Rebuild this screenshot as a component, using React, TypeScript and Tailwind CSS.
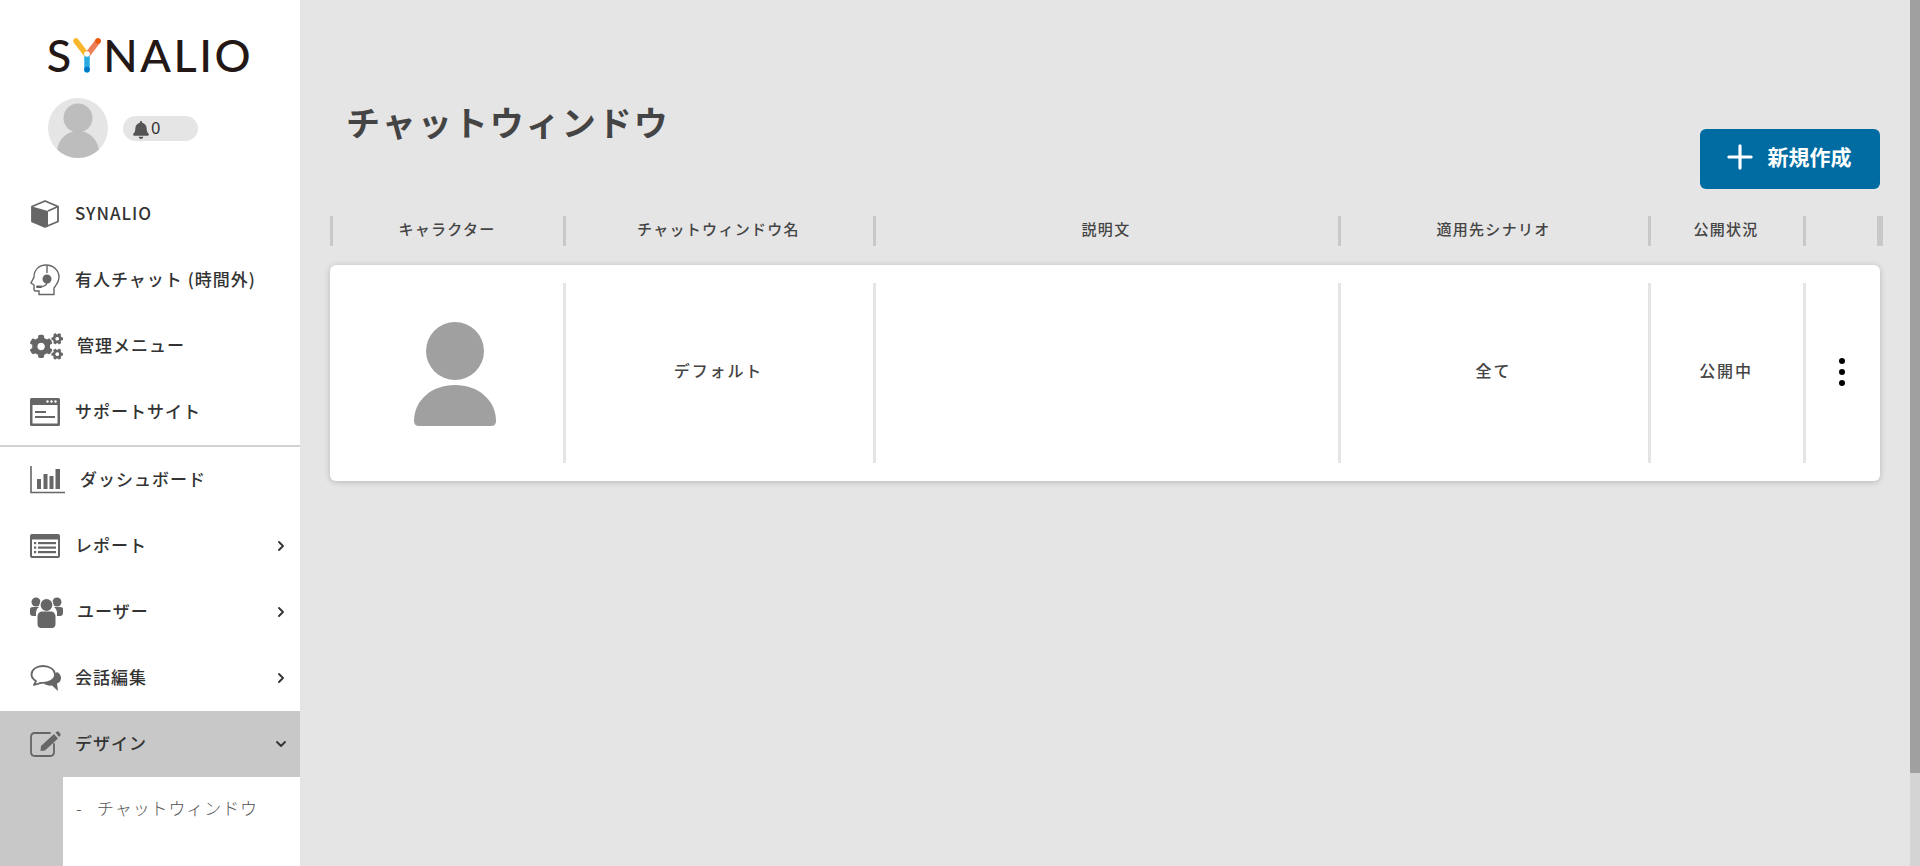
import React from 'react';
import { ChevronDown, ChevronRight, Plus } from 'lucide-react';
import { FaBell, FaCogs } from 'react-icons/fa';

const ICON = '#666666';

function BoxIcon() {
  return (
    <svg width="30" height="30" viewBox="0 0 30 30">
      <path d="M15 2 L28 7.500 V22.500 L15 28 L2 22.500 V7.500 Z" fill="none" stroke={ICON} strokeWidth="1.8" strokeLinejoin="round" />
      <path d="M2 7.500 L18 12 V28 L15 28 L2 22.500 Z" fill={ICON} />
      <path d="M18 12 L28 7.500" stroke={ICON} strokeWidth="1.8" />
    </svg>
  );
}

function HeadsetIcon() {
  return (
    <svg width="30" height="32" viewBox="0 0 30 32" fill="none" stroke={ICON} strokeWidth="1.4">
      <path d="M9 30.500 V27 H5.500 Q4 27 4 25 V21 L1 19 L4 13 C4 6 9 1 16 1 C24 1 29 7 29 13 C29 18 26 21 24 24 V30.500 Z" />
      <path d="M17 1 V9" />
      <circle cx="17" cy="15" r="4.500" fill={ICON} stroke="none" />
      <path d="M17 19 C16 22 13 23 8 23" />
      <rect x="6" y="21.500" width="6" height="2.400" rx="1.200" fill={ICON} stroke="none" />
    </svg>
  );
}

function BrowserIcon() {
  return (
    <svg width="30" height="28" viewBox="0 0 30 28">
      <rect x="0" y="0" width="30" height="28" rx="1.500" fill={ICON} />
      <rect x="2.500" y="7" width="25" height="18.500" fill="#fff" />
      <circle cx="17.500" cy="3.500" r="1.200" fill="#fff" />
      <circle cx="21.500" cy="3.500" r="1.200" fill="#fff" />
      <circle cx="25.500" cy="3.500" r="1.200" fill="#fff" />
      <rect x="5" y="13" width="11" height="2" fill={ICON} />
      <rect x="5" y="18" width="20" height="2" fill={ICON} />
    </svg>
  );
}

function ChartIcon() {
  return (
    <svg width="36" height="28" viewBox="0 0 36 28">
      <path d="M1 0 V26.500 H35" fill="none" stroke={ICON} strokeWidth="1.600" />
      <rect x="7" y="13" width="4" height="10" fill={ICON} />
      <rect x="13.500" y="8" width="4" height="15" fill={ICON} />
      <rect x="19.500" y="10" width="4" height="13" fill={ICON} />
      <rect x="25.500" y="3" width="4.500" height="20" fill={ICON} />
    </svg>
  );
}

function ReportIcon() {
  return (
    <svg width="30" height="24" viewBox="0 0 30 24">
      <rect x="0" y="0" width="30" height="24" rx="2" fill={ICON} />
      <rect x="2" y="5.500" width="26" height="16.500" fill="#fff" />
      {[8, 12.500, 17].map((y) => (
        <g key={y} fill={ICON}>
          <rect x="4" y={y} width="2.200" height="2.200" />
          <rect x="8" y={y} width="18" height="2.200" />
        </g>
      ))}
    </svg>
  );
}

function UsersIcon() {
  return (
    <svg width="33" height="31" viewBox="0 0 33 31" fill={ICON}>
      <circle cx="6" cy="5" r="4.500" />
      <circle cx="27" cy="5" r="4.500" />
      <path d="M0 12 Q0 10 3 10 H9 Q6 12 6 15 V19 H3 Q0 19 0 16 Z" />
      <path d="M33 12 Q33 10 30 10 H24 Q27 12 27 15 V19 H30 Q33 19 33 16 Z" />
      <circle cx="16.500" cy="8" r="6.500" stroke="#fff" strokeWidth="1.200" />
      <path d="M7.500 20 C7.500 16 10 14.500 12 14.500 H21 C23 14.500 25.500 16 25.500 20 V27 C25.500 29.500 24 31 22 31 H11 C9 31 7.500 29.500 7.500 27 Z" />
    </svg>
  );
}

function ChatIcon() {
  return (
    <svg width="32" height="28" viewBox="0 0 32 28">
      <path d="M31 14 C31 11 29 9 27 8 L14 20 C16 21 19 22 22 21.500 L28 27 L27 19.500 C30 18.500 31 16 31 14 Z" fill={ICON} />
      <path d="M13 2 C6.500 2 1.500 5.500 1.500 10.500 C1.500 13.500 3.500 15.500 6 17 L4 21 L11 18.800 C18 19.500 25 16 25 10.500 C25 5.500 19.500 2 13 2 Z" fill="#fff" stroke={ICON} strokeWidth="1.800" strokeLinejoin="round" />
    </svg>
  );
}

function EditIcon() {
  return (
    <svg width="32" height="26" viewBox="0 0 32 26">
      <path d="M20 2 H5 Q1 2 1 6 V21 Q1 25 5 25 H20 Q24 25 24 21 V13" fill="none" stroke={ICON} strokeWidth="1.800" strokeLinecap="round" />
      <path d="M11 15 L24 3 L28 7.500 L15 19.500 L10.500 20 Z" fill={ICON} />
      <path d="M25.500 1.500 L27 0.500 Q28 0 29 1 L30.500 3 Q31 4 30 5 L29 6 Z" fill={ICON} />
    </svg>
  );
}

function AvatarPerson() {
  return (
    <svg width="60" height="60" viewBox="0 0 60 60">
      <circle cx="30" cy="20" r="14.500" fill="#bdbdbd" />
      <ellipse cx="30" cy="54" rx="21" ry="21" fill="#bdbdbd" />
    </svg>
  );
}

function CardPerson() {
  return (
    <svg width="82" height="104" viewBox="0 0 82 104" fill="#a0a0a0" className="mt-[2px]">
      <circle cx="41" cy="29" r="29" />
      <path d="M0 99 C0 78 18 63 41 63 C64 63 82 78 82 99 Q82 104 77 104 H5 Q0 104 0 99 Z" />
    </svg>
  );
}

function Logo() {
  return (
    <div className="flex items-center justify-center h-[34px] font-['Lato',sans-serif] font-medium text-[#231815] text-[45px] leading-none">
      <span>S</span>
      <svg width="30" height="36" viewBox="0 0 30 36" className="mx-[1px]">
        <path d="M4 4 L14 17" stroke="#f8b62d" strokeWidth="5.500" strokeLinecap="round" />
        <path d="M26 4 L16 17" stroke="#ef7d56" strokeWidth="5.500" strokeLinecap="round" />
        <circle cx="26" cy="4" r="2.800" fill="#ea5a0c" />
        <path d="M15 20 V33" stroke="#29abe2" strokeWidth="5.500" strokeLinecap="round" />
        <circle cx="15" cy="32.500" r="2.800" fill="#0078c8" />
        <circle cx="15" cy="17" r="2.800" fill="#fff" />
      </svg>
      <span className="tracking-[2.600px]">NALIO</span>
    </div>
  );
}

const topItems = [
  { label: 'SYNALIO', icon: <BoxIcon />, gap: 'w-[45px]' },
  { label: '有人チャット (時間外)', icon: <HeadsetIcon />, gap: 'w-[45px]' },
  { label: '管理メニュー', icon: <FaCogs size={33} color={ICON} />, gap: 'w-[47px]' },
  { label: 'サポートサイト', icon: <BrowserIcon />, gap: 'w-[45px]' },
];

const bottomItems = [
  { label: 'ダッシュボード', icon: <ChartIcon />, gap: 'w-[50px]' },
  { label: 'レポート', icon: <ReportIcon />, gap: 'w-[45px]', arrow: true },
  { label: 'ユーザー', icon: <UsersIcon />, gap: 'w-[47px]', arrow: true },
  { label: '会話編集', icon: <ChatIcon />, gap: 'w-[45px]', arrow: true },
];

function NavRow({ label, icon, gap, arrow }: { label: string; icon: React.ReactNode; gap: string; arrow?: boolean }) {
  return (
    <div className="h-[66px] flex items-center pl-[30px] pr-[11px]">
      <div className={`${gap} flex items-center shrink-0`}>{icon}</div>
      <span className="flex-1 -mt-[2px] text-[17px] tracking-[1px] text-[#333] font-medium">{label}</span>
      {arrow && <ChevronRight size={16} strokeWidth={2.800} color="#333" />}
    </div>
  );
}

function Sidebar() {
  return (
    <aside className="w-[300px] shrink-0 bg-white h-full flex flex-col overflow-hidden">
      <div className="pt-[38px]">
        <Logo />
      </div>
      <div className="flex items-center mt-[26px] pl-[48px]">
        <div className="w-[60px] h-[60px] rounded-full bg-[#e5e5e5] overflow-hidden">
          <AvatarPerson />
        </div>
        <div className="ml-[15px] w-[75px] h-[25px] rounded-full bg-[#e5e5e5] flex items-center pl-[9px] gap-[1px] text-[17px] leading-none text-[#333]">
          <FaBell size={18} color="#555" className="mt-[4px]" />
          <span className="-mt-[3px]">0</span>
        </div>
      </div>
      <nav className="mt-[23px]">
        {topItems.map((item) => (
          <NavRow key={item.label} {...item} />
        ))}
        <div className="h-[2px] bg-[#d2d2d2]" />
        {bottomItems.map((item) => (
          <NavRow key={item.label} {...item} />
        ))}
        <div className="h-[66px] flex items-center pl-[30px] pr-[11px] bg-[#c8c8c8]">
          <div className="w-[45px] flex items-center shrink-0">
            <EditIcon />
          </div>
          <span className="flex-1 -mt-[2px] text-[17px] tracking-[1px] text-[#333] font-medium">デザイン</span>
          <ChevronDown size={16} strokeWidth={2.800} color="#333" />
        </div>
        <div className="bg-[#c8c8c8] pl-[63px] h-[90px]">
          <div className="bg-white h-full pt-[18px] pl-[13px] flex text-[17px] tracking-[0.900px] font-light text-[#555]">
            <span className="w-[21px]">-</span>
            <span>チャットウィンドウ</span>
          </div>
        </div>
      </nav>
    </aside>
  );
}

const columns = ['w-[233px]', 'w-[310px]', 'w-[465px]', 'w-[310px]', 'w-[155px]', 'w-[74px]'];
const headers = ['キャラクター', 'チャットウィンドウ名', '説明文', '適用先シナリオ', '公開状況', ''];

function Table() {
  return (
    <>
      <div className="flex items-center h-[30px] mt-[27px] w-[1553px]">
        {headers.map((h, i) => (
          <div
            key={i}
            className={`${columns[i]} h-full pb-[3px] pr-[2px] border-l-[3px] border-[#c8c8c8] flex items-center justify-center text-[15px] tracking-[1.300px] font-medium text-[#444]`}
          >
            {h}
          </div>
        ))}
        <div className="w-[6px] h-full bg-[#c8c8c8]" />
      </div>
      <div className="mt-[19px] w-[1550px] h-[216px] bg-white rounded-[6px] shadow-[0_1px_6px_rgba(0,0,0,0.2)] py-[18px] flex">
        <div className={`${columns[0]} flex items-center justify-center pl-[16px]`}>
          <CardPerson />
        </div>
        <Cell width={columns[1]}>デフォルト</Cell>
        <Cell width={columns[2]}>{''}</Cell>
        <Cell width={columns[3]}>全て</Cell>
        <Cell width={columns[4]}>公開中</Cell>
        <div className={`${columns[5]} border-l-[3px] border-[#e5e5e5] flex-1 flex flex-col items-center justify-center gap-[5px] pr-[3px] pb-[2px]`}>
          <span className="w-[6px] h-[6px] rounded-full bg-black" />
          <span className="w-[6px] h-[6px] rounded-full bg-black" />
          <span className="w-[6px] h-[6px] rounded-full bg-black" />
        </div>
      </div>
    </>
  );
}

function Cell({ width, children }: { width: string; children: React.ReactNode }) {
  return (
    <div className={`${width} pb-[6px] pr-[2px] border-l-[3px] border-[#e5e5e5] flex items-center justify-center text-[16px] tracking-[1.900px] font-medium text-[#444]`}>
      {children}
    </div>
  );
}

export default function App() {
  return (
    <div className="w-[1920px] h-[866px] flex overflow-hidden bg-[#e5e5e5] font-['Noto_Sans_CJK_JP','Noto_Sans',sans-serif]">
      <Sidebar />
      <main className="flex-1 pl-[30px] pt-[97px]">
        <div className="flex justify-between w-[1550px]">
          <h1 className="pl-[16px] text-[34px] leading-[50px] tracking-[2px] font-bold text-[#444]">チャットウィンドウ</h1>
          <button className="mt-[32px] w-[180px] h-[60px] rounded-[6px] bg-[#006ca2] text-white flex items-center justify-center gap-[9px] pr-[8px] pb-[4px] text-[21px] font-bold">
            <Plus size={38} strokeWidth={2} />
            <span>新規作成</span>
          </button>
        </div>
        <Table />
      </main>
      <div className="w-[10px] h-full bg-[#d4d4d4] shrink-0">
        <div className="h-[773px] bg-[#a0a0a0]" />
      </div>
    </div>
  );
}
